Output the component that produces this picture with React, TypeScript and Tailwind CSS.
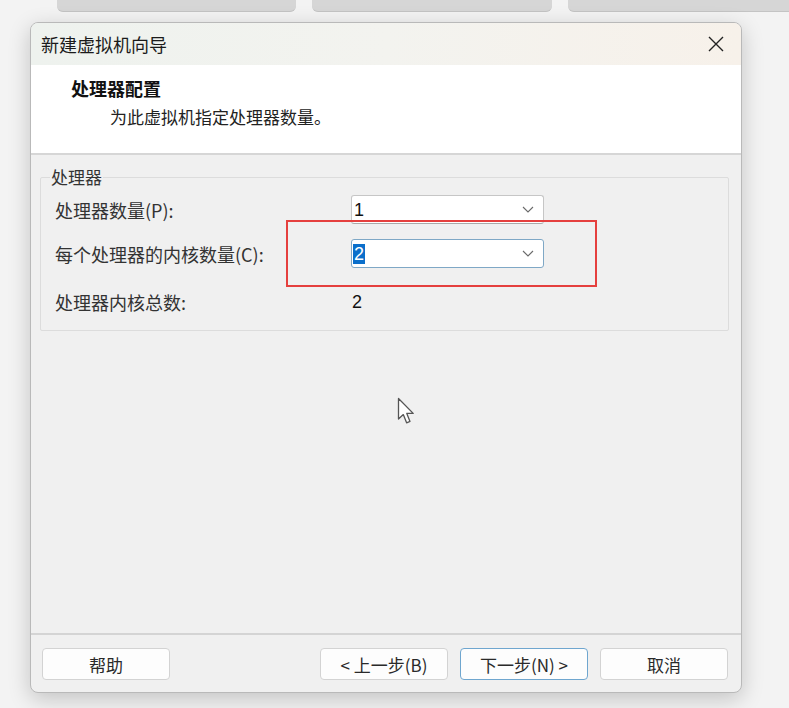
import React from 'react'

const cjk = { fontFamily: '"Noto Sans CJK SC", "Noto Sans", sans-serif' }

function Chevron() {
  return (
    <svg width="12" height="7" viewBox="0 0 12 7" className="shrink-0">
      <path d="M1 1 L6 6 L11 1" fill="none" stroke="#6b6b6b" strokeWidth="1.1" />
    </svg>
  )
}

function Combo({ value, focused }: { value: string; focused?: boolean }) {
  return (
    <div
      className={`flex h-[29px] w-[193px] items-center justify-between rounded-[3px] border bg-white pl-[1px] pr-[9px] ${
        focused ? 'border-[#7fa8c6]' : 'border-[#c6c6c6] border-b-[#a9a9a9]'
      }`}
    >
      <span
        className={`px-[1px] text-[18px] leading-[20px] ${focused ? 'bg-[#0a6fcb] text-white' : 'text-[#111]'}`}
        style={{ fontFamily: '"Liberation Sans", sans-serif' }}
      >
        {value}
      </span>
      <Chevron />
    </div>
  )
}

function Btn({ label, primary }: { label: string; primary?: boolean }) {
  return (
    <button
      className={`h-[32px] w-[128px] rounded-[4px] border bg-[#fdfdfd] text-[17px] leading-none text-[#2a2a2a] ${
        primary ? 'border-[#6fa6cf]' : 'border-[#d3d3d3]'
      }`}
      style={cjk}
    >
      {label}
    </button>
  )
}

export default function App() {
  return (
    <div className="relative flex h-[708px] w-[789px] flex-col overflow-hidden bg-[#f3f3f3]" style={cjk}>
      {/* windows peeking from behind */}
      <div className="flex h-[12px] gap-[16px] pl-[57px]">
        <div className="w-[239px] rounded-b-[6px] border-b border-[#c4c4c4] bg-[#d6d6d6]" />
        <div className="w-[240px] rounded-b-[6px] border-b border-[#c4c4c4] bg-[#d6d6d6]" />
        <div className="flex-1 rounded-bl-[6px] border-b border-[#c4c4c4] bg-[#d6d6d6]" />
      </div>

      {/* dialog */}
      <div className="ml-[30px] mt-[10px] flex h-[671px] w-[712px] flex-col overflow-hidden rounded-[8px] border border-[#b9b9b9] bg-[#f0f0f0] shadow-[0_6px_22px_rgba(0,0,0,0.2)]">
        <div className="flex h-[42px] items-center justify-between bg-gradient-to-r from-[#eef2ee] via-[#f3f3ef] to-[#f7f1ea] pl-[10px] pr-[17px]">
          <span className="text-[18px] leading-none text-[#1b1b1b]">新建虚拟机向导</span>
          <svg width="16" height="16" viewBox="0 0 16 16">
            <path d="M1 1 L15 15 M15 1 L1 15" stroke="#222" strokeWidth="1.4" />
          </svg>
        </div>

        <div className="h-[90px] border-b-2 border-[#d6d6d6] bg-white pl-[40px] pt-[14px]">
          <div className="text-[18px] font-bold leading-[18px] text-[#111]">处理器配置</div>
          <div className="ml-[39px] mt-[11px] text-[17px] leading-[18px] text-[#222]">为此虚拟机指定处理器数量。</div>
        </div>

        <div className="flex-1 pl-[9px] pt-[14px]">
          <fieldset className="h-[162px] w-[689px] rounded-[2px] border border-[#dcdcdc] px-[14px]">
            <legend className="ml-[-5px] px-[1px] text-[17px] leading-[16px] text-[#333]">处理器</legend>
            <div className="mt-[10px] grid grid-cols-[296px_193px] items-center gap-y-[15px] text-[18px] leading-none text-[#333]">
              <span>处理器数量(P):</span>
              <Combo value="1" />
              <span>每个处理器的内核数量(C):</span>
              <Combo value="2" focused />
              <span className="mt-[10px]">处理器内核总数:</span>
              <span
                className="mt-[10px] pl-[1px] text-[18px] text-[#111]"
                style={{ fontFamily: '"Liberation Sans", sans-serif' }}
              >
                2
              </span>
            </div>
          </fieldset>
        </div>

        <div className="flex h-[59px] items-start border-t-2 border-[#d4d4d4] pl-[11px] pr-[13px] pt-[13px]">
          <Btn label="帮助" />
          <div className="ml-auto flex gap-[12px]">
            <Btn label="< 上一步(B)" />
            <Btn label="下一步(N) >" primary />
            <Btn label="取消" />
          </div>
        </div>
      </div>

      {/* annotation highlight */}
      <div className="absolute left-[286px] top-[220px] h-[67px] w-[311px] border-2 border-[#e5403e]" />

      {/* mouse pointer */}
      <svg className="absolute left-[397px] top-[397px]" width="19" height="29" viewBox="0 0 19 29">
        <path
          d="M1.5 1.5 L1.5 22 L6.3 17.6 L9.6 25.8 L13 24.4 L9.8 16.4 L16.2 16.4 Z"
          fill="#fff"
          stroke="#555"
          strokeWidth="1.3"
          strokeLinejoin="round"
        />
      </svg>
    </div>
  )
}
